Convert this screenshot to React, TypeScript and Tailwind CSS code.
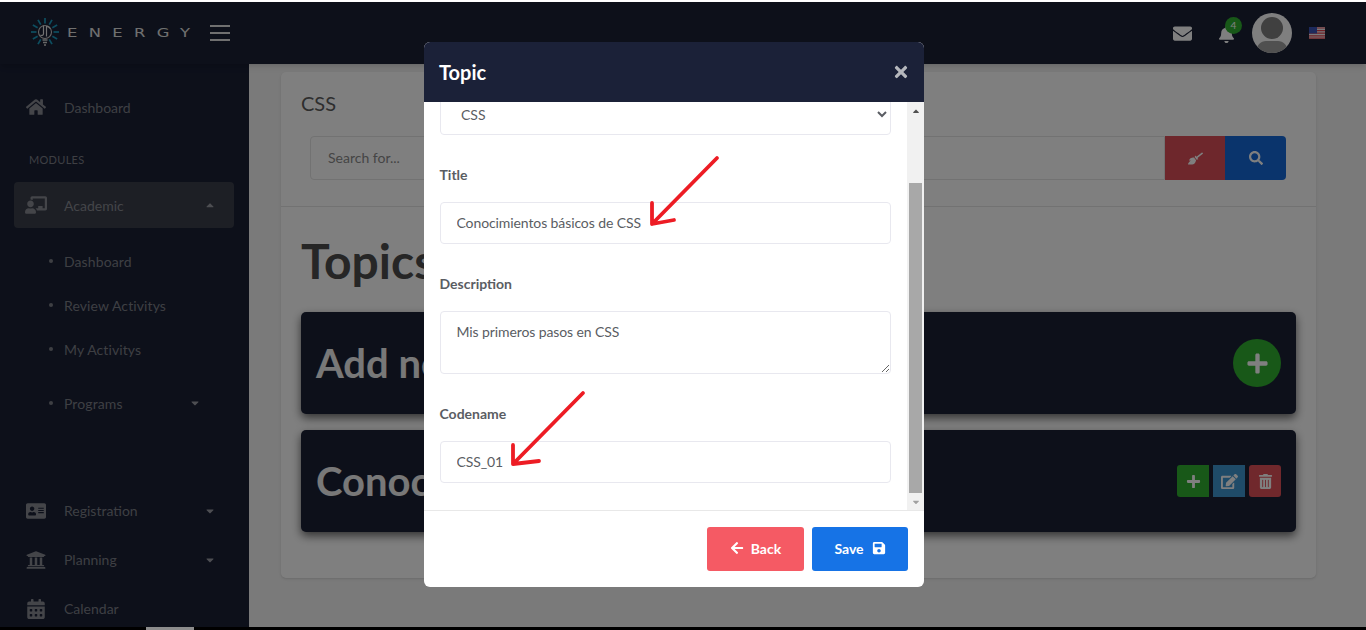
import React from "react";
import {
  FaHome, FaChalkboardTeacher, FaAddressCard, FaUniversity, FaCalendarAlt, FaEnvelope, FaBell, FaBroom, FaSearch,
  FaPlus, FaEdit, FaTrashAlt, FaArrowLeft, FaSave, FaTimes, FaCaretDown, FaCaretUp,
} from "react-icons/fa";

const font = { fontFamily: "Lato, 'Noto Sans', sans-serif" };

function NavItem({ icon, label, caret, h }: { icon: React.ReactNode; label: string; caret?: boolean; h: string }) {
  return (
    <div className={`flex items-center pl-[26px] pr-[33px] ${h}`}>
      <span className="w-[38px] text-[20px] text-[#888a92] flex justify-start">{icon}</span>
      <span className="flex-1 text-[14px] text-[#7c7f87]">{label}</span>
      {caret && <FaCaretDown className="text-[12px] text-[#9a9ca4]" />}
    </div>
  );
}

function SubItem({ label, caret, h }: { label: string; caret?: boolean; h: string }) {
  return (
    <div className={`flex items-center pl-[49px] pr-[48px] ${h}`}>
      <span className="w-[4px] h-[4px] rounded-full bg-[#7c7f87] mr-[11px]" />
      <span className="flex-1 text-[14px] tracking-[0.1px] text-[#7c7f87]">{label}</span>
      {caret && <FaCaretDown className="text-[12px] text-[#9a9ca4]" />}
    </div>
  );
}

function Logo() {
  const rays = [0, 30, 60, 90, 120, 150, 210, 240, 270, 300, 330];
  return (
    <svg width="32" height="32" viewBox="0 0 32 32">
      {rays.map((r) => (
        <line key={r} x1="16" y1="1" x2="16" y2="6.5" stroke="#1a9cc0" strokeWidth="1.7" transform={`rotate(${r} 16 15)`} />
      ))}
      <circle cx="16" cy="15" r="6.5" fill="none" stroke="#c8c8c8" strokeWidth="1.1" />
      <path d="M14.5 8.5v8.5a1.8 1.8 0 0 1-3 1M21 11.5a3.6 3.6 0 0 0-3.5-2v10" stroke="#e4e4e4" strokeWidth="1.2" fill="none" />
      <path d="M13.5 23h5M14 25.5h4M15 28h2" stroke="#d0d0d0" strokeWidth="1.6" />
    </svg>
  );
}

function Flag() {
  return (
    <svg width="16" height="12" viewBox="0 0 16 12">
      <rect width="16" height="12" fill="#f2f2f8" />
      <path d="M0 1h16M0 3.6h16M0 6.2h16M0 8.8h16M0 11.2h16" stroke="#e0404a" strokeWidth="1.2" />
      <rect width="8" height="6.5" fill="#3a55b8" />
    </svg>
  );
}

function Arrow({ cls, w, h, d }: { cls: string; w: number; h: number; d: string }) {
  return (
    <svg width={w} height={h} viewBox={`0 0 ${w} ${h}`} className={`absolute pointer-events-none ${cls}`}>
      <path d={d} fill="none" stroke="#ed1c24" strokeWidth="3.8" strokeLinecap="round" strokeLinejoin="round" />
    </svg>
  );
}

const field = "block w-full h-[42px] rounded-[4px] border border-[#e8e8ef] bg-white pl-[15.5px] pr-[12px] pb-[2px] text-[14px] tracking-[-0.1px] text-[#5a5d63] outline-none";
const label = "block mt-[30px] h-[20px] leading-[20px] -ml-[0.5px] text-[14px] font-bold text-[#5a5d63]";

export default function App() {
  return (
    <div className="relative w-[1366px] h-[630px] overflow-hidden bg-[#f4f4f4] flex flex-col" style={font}>
      <div className="h-[2px] bg-white shrink-0" />
      <header className="h-[62px] shrink-0 bg-[#1a2035] flex items-center pl-[29px] pr-[41px] shadow-md relative z-10">
        <Logo />
        <div className="ml-[6px] w-[143px]">
          <span className="block origin-left scale-x-[1.26] text-[#e0e0e0] text-[13px] tracking-[9px] whitespace-nowrap" style={{ fontFamily: "'DejaVu Sans', sans-serif" }}>ENERGY</span>
        </div>
        <div className="flex flex-col gap-[5px]">
          <span className="block w-[20px] h-[2px] bg-[#e0e0e0]" />
          <span className="block w-[20px] h-[2px] bg-[#e0e0e0]" />
          <span className="block w-[20px] h-[2px] bg-[#e0e0e0]" />
        </div>
        <div className="ml-auto flex items-center">
          <FaEnvelope className="text-white text-[19px] mr-[26px]" />
          <div className="relative mr-[16px] w-[18px] h-[40px] flex items-center">
            <FaBell className="text-white text-[17px] mt-[3px]" />
            <span className="absolute left-[7px] top-[4px] w-[17px] h-[17px] rounded-full bg-[#30b030] text-white text-[10px] flex items-center justify-center">4</span>
          </div>
          <svg width="40" height="40" viewBox="0 0 40 40" className="mr-[17px]">
            <defs><clipPath id="av"><circle cx="20" cy="20" r="20" /></clipPath></defs>
            <circle cx="20" cy="20" r="20" fill="#ffffff" />
            <g clipPath="url(#av)">
              <path d="M4 40c0-8 5-12 10-12h12c5 0 10 4 10 12z" fill="#a0a0a0" />
              <circle cx="20" cy="15" r="11" fill="#808080" />
            </g>
          </svg>
          <Flag />
        </div>
      </header>

      <div className="flex flex-1 min-h-0">
        <aside className="w-[249px] shrink-0 bg-[#1a2035] overflow-hidden">
          <NavItem h="h-[44px] mt-[21px]" icon={<FaHome />} label="Dashboard" />
          <div className="mt-[23px] pl-[29px] text-[11px] tracking-[0.3px] text-[#7c7f87] h-[16px] leading-[16px]">MODULES</div>
          <div className="ml-[14px] mr-[15px] mt-[14px] h-[46px] rounded-[4px] bg-[#3a3e4a] flex items-center pl-[11px] pr-[18px]">
            <span className="w-[39px] text-[#888a92] text-[22px]"><FaChalkboardTeacher /></span>
            <span className="flex-1 text-[14px] text-[#888a92]">Academic</span>
            <FaCaretUp className="text-[12px] text-[#9a9ca4]" />
          </div>
          <div className="mt-[11px]">
            <SubItem h="h-[44px]" label="Dashboard" />
            <SubItem h="h-[44px]" label="Review Activitys" />
            <SubItem h="h-[44px]" label="My Activitys" />
            <SubItem h="h-[44px] mt-[10px]" label="Programs" caret />
          </div>
          <NavItem h="h-[49px] mt-[61px]" icon={<FaAddressCard />} label="Registration" caret />
          <NavItem h="h-[49px]" icon={<FaUniversity />} label="Planning" caret />
          <NavItem h="h-[49px]" icon={<FaCalendarAlt />} label="Calendar" />
        </aside>

        <main className="flex-1 min-w-0 pl-[32px] pr-[50px] pt-[8px]">
          <div className="h-[506px] rounded-[5px] bg-white shadow-sm">
            <div className="h-[135px] border-b border-[#e4e4e4] pl-[20px] pr-[30px] pt-[17px]">
              <div className="text-[20px] leading-[28px] text-[#5c5c5c]">CSS</div>
              <div className="flex ml-[9px] mt-[19px] h-[44px]">
                <input readOnly placeholder="Search for..." className="flex-1 min-w-0 h-full border border-[#e4e4e4] rounded-l-[4px] pl-[17px] pb-[2px] text-[14px] text-[#8a8a8a] placeholder:text-[#8a8a8a] outline-none" />
                <div className="w-[60px] bg-[#dc4f58] flex items-center justify-center text-white text-[15px]"><FaBroom /></div>
                <div className="w-[61px] bg-[#1568d8] rounded-r-[4px] flex items-center justify-center text-white text-[14px]"><FaSearch /></div>
              </div>
            </div>
            <div className="px-[20px]">
              <h1 className="text-[48px] leading-[58px] font-bold text-[#4c4c4c] mt-[25px]">Topics</h1>
              <div className="mt-[22px] h-[102px] rounded-[5px] bg-[#1a2035] shadow-[0_4px_10px_rgba(0,0,0,0.6)] flex items-center pl-[15px] pr-[15px]">
                <span className="flex-1 text-[40px] font-bold text-[#f0f0f0] whitespace-nowrap">Add new Topic</span>
                <span className="w-[48px] h-[48px] rounded-full bg-[#30b030] flex items-center justify-center text-white text-[23px]"><FaPlus /></span>
              </div>
              <div className="mt-[16px] h-[102px] rounded-[5px] bg-[#1a2035] shadow-[0_4px_10px_rgba(0,0,0,0.6)] flex items-center pl-[15px] pr-[15px]">
                <span className="flex-1 text-[40px] font-bold text-[#f0f0f0] whitespace-nowrap">Conocimientos básicos de CSS</span>
                <div className="flex gap-[4px] text-white text-[15px]">
                  <span className="w-[32px] h-[32px] rounded-l-[3px] bg-[#30b030] flex items-center justify-center"><FaPlus /></span>
                  <span className="w-[32px] h-[32px] bg-[#3f96d0] flex items-center justify-center text-[17px]"><FaEdit /></span>
                  <span className="w-[32px] h-[32px] rounded-[3px] bg-[#e05058] flex items-center justify-center"><FaTrashAlt /></span>
                </div>
              </div>
            </div>
          </div>
        </main>
      </div>
      <div className="h-[3px] shrink-0 bg-black flex pl-[146px]"><div className="w-[48px] h-full bg-[#8c8c8c]" /></div>

      <div className="absolute left-0 right-0 top-[2px] bottom-[3px] bg-black/50 z-20" />

      <div className="absolute z-30 left-[424px] top-[42px] w-[500px] h-[545px] rounded-[6px] bg-white overflow-hidden flex flex-col">
        <div className="h-[60px] shrink-0 bg-[#1b2138] flex items-center justify-between pl-[15px] pr-[14px]">
          <span className="text-[20px] font-bold text-white -mt-[1px]">Topic</span>
          <FaTimes className="text-[#b5b7bc] text-[18px]" />
        </div>
        <div className="relative h-[408px] shrink-0 overflow-hidden flex">
          <div className="flex-1 min-w-0 pl-[16px] pr-[16px] -mt-[9px]">
            <select defaultValue="CSS" className="block w-full h-[42px] rounded-[4px] border border-[#e8e8ef] bg-white pl-[16px] pr-[10px] text-[14px] text-[#5a5d63] outline-none">
              <option>CSS</option>
            </select>
            <label className={label}>Title</label>
            <input readOnly value="Conocimientos básicos de CSS" className={`${field} mt-[17px]`} />
            <label className={label}>Description</label>
            <textarea readOnly value="Mis primeros pasos en CSS" className="block w-full h-[63px] mt-[17px] rounded-[4px] border border-[#e8e8ef] bg-white pl-[15.5px] pr-[12px] pt-[9px] text-[14px] tracking-[-0.1px] text-[#5a5d63] outline-none" />
            <label className={label}>Codename</label>
            <input readOnly value="CSS_01" className={`${field} mt-[17px]`} />
          </div>
          <div className="w-[17px] shrink-0 bg-[#f1f1f1] flex flex-col items-center">
            <div className="h-[17px] shrink-0 flex items-center justify-center"><FaCaretUp className="text-[10px] text-[#505050]" /></div>
            <div className="h-[64px] shrink-0" />
            <div className="w-[13px] h-[310px] bg-[#a8a8a8] shrink-0" />
            <div className="h-[17px] shrink-0 flex items-center justify-center"><FaCaretDown className="text-[10px] text-[#a0a0a0]" /></div>
          </div>
        </div>
        <div className="flex-1 border-t border-[#e8e8e8] flex items-start justify-end gap-[8px] pt-[16px] pr-[16px]">
          <button className="w-[97px] h-[44px] pb-[2px] rounded-[3px] bg-[#f55a64] text-white text-[14px] font-bold flex items-center justify-center gap-[7px]"><FaArrowLeft className="text-[14px]" />Back</button>
          <button className="w-[96px] h-[44px] pb-[2px] rounded-[3px] bg-[#1673e6] text-white text-[14px] font-bold flex items-center justify-center gap-[8px]">Save<FaSave className="text-[14px]" /></button>
        </div>
      </div>

      <Arrow cls="z-40 left-[640px] top-[150px]" w={90} h={85} d="M77 8 L12 74 M12 74 L12 53 M12 74 L34 70" />
      <Arrow cls="z-40 left-[500px] top-[385px]" w={90} h={85} d="M83 8 L13 79 M13 79 L13 60 M13 79 L39 76" />
    </div>
  );
}
